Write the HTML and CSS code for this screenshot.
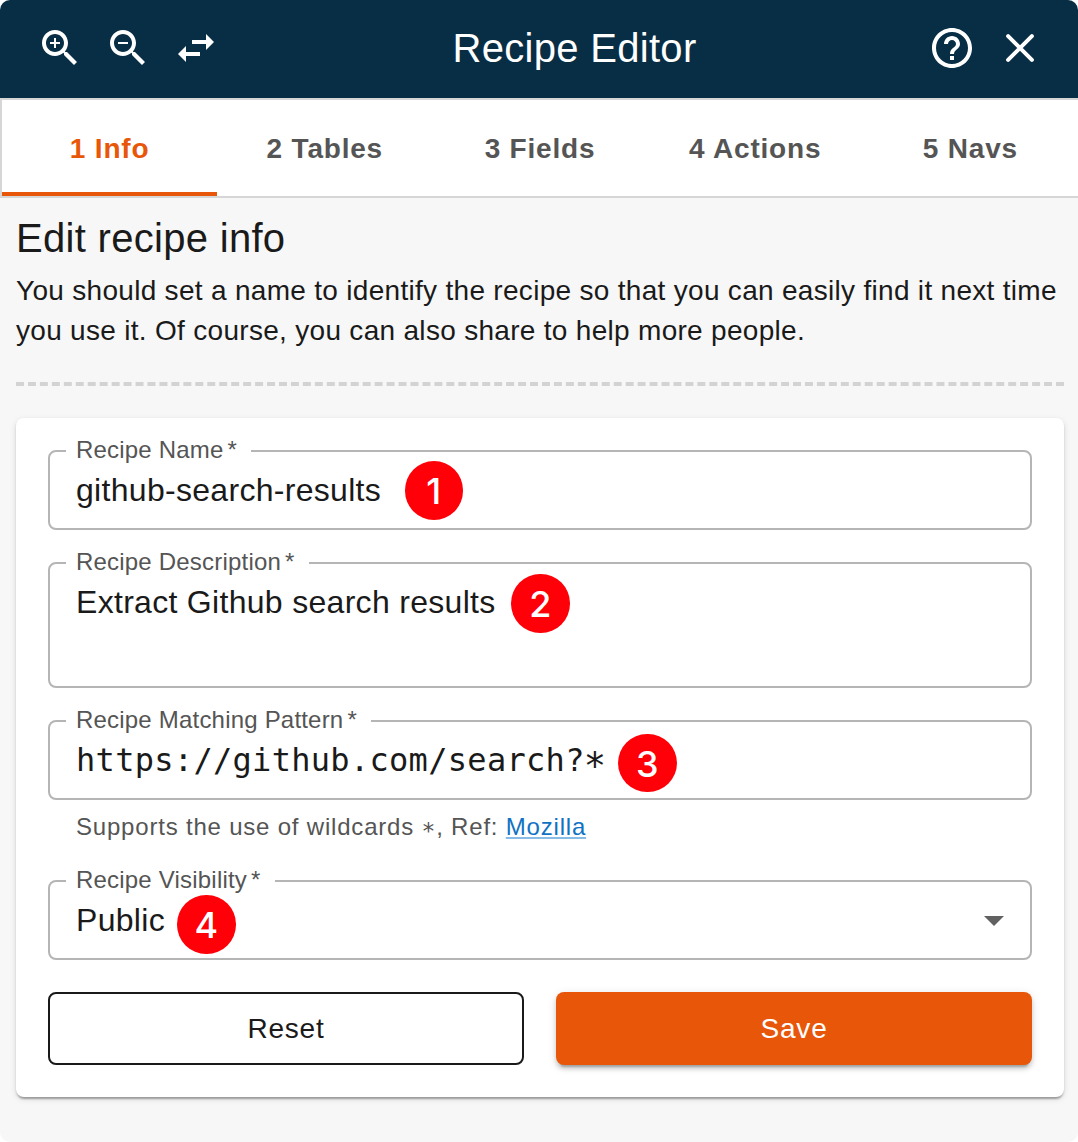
FILE: index.html
```html
<!DOCTYPE html>
<html lang="en">
<head>
<meta charset="utf-8">
<title>Recipe Editor</title>
<link rel="stylesheet" href="styles.css">
</head>
<body>
<div class="panel">
  <header class="header">
    <div class="tools">
      <svg class="icon" viewBox="0 0 24 24"><path d="M15.5 14h-.79l-.28-.27C15.41 12.59 16 11.11 16 9.5 16 5.91 13.09 3 9.5 3S3 5.91 3 9.5 5.91 16 9.5 16c1.61 0 3.09-.59 4.23-1.57l.27.28v.79l5 4.99L20.49 19l-4.99-5zm-6 0C7.01 14 5 11.99 5 9.5S7.01 5 9.5 5 14 7.01 14 9.5 11.99 14 9.5 14z"/><path d="M12 10h-2v2H9v-2H7V9h2V7h1v2h2v1z"/></svg>
      <svg class="icon" viewBox="0 0 24 24"><path d="M15.5 14h-.79l-.28-.27C15.41 12.59 16 11.11 16 9.5 16 5.91 13.09 3 9.5 3S3 5.91 3 9.5 5.91 16 9.5 16c1.61 0 3.09-.59 4.23-1.57l.27.28v.79l5 4.99L20.49 19l-4.99-5zm-6 0C7.01 14 5 11.99 5 9.5S7.01 5 9.5 5 14 7.01 14 9.5 11.99 14 9.5 14z"/><path d="M7 9h5v1H7z"/></svg>
      <svg class="icon" viewBox="0 0 24 24"><path d="M6.99 11 3 15l3.99 4v-3H14v-2H6.99v-3zM21 9l-3.99-4v3H10v2h7.01v3L21 9z"/></svg>
    </div>
    <h1 class="title">Recipe Editor</h1>
    <div class="tools">
      <svg class="icon" viewBox="0 0 24 24"><path d="M11 18h2v-2h-2v2zm1-16C6.48 2 2 6.48 2 12s4.48 10 10 10 10-4.48 10-10S17.52 2 12 2zm0 18c-4.41 0-8-3.59-8-8s3.59-8 8-8 8 3.59 8 8-3.59 8-8 8zm0-14c-2.21 0-4 1.79-4 4h2c0-1.1.9-2 2-2s2 .9 2 2c0 2-3 1.75-3 5h2c0-2.25 3-2.5 3-5 0-2.21-1.79-4-4-4z"/></svg>
      <svg class="icon close" viewBox="0 0 24 24"><path d="M6.05 6.05l11.9 11.9M17.95 6.05l-11.9 11.9"/></svg>
    </div>
  </header>
  <nav class="tabs">
    <a class="tab active">1 Info</a>
    <a class="tab">2 Tables</a>
    <a class="tab">3 Fields</a>
    <a class="tab">4 Actions</a>
    <a class="tab">5 Navs</a>
  </nav>
  <main class="content">
    <h2 class="heading">Edit recipe info</h2>
    <p class="intro">You should set a name to identify the recipe so that you can easily find it next time you use it. Of course, you can also share to help more people.</p>
    <hr class="divider">
    <form class="card">
      <fieldset class="field">
        <legend>Recipe Name<span class="required">*</span></legend>
        <div class="value">github-search-results</div>
        <span class="badge badge-name">1</span>
      </fieldset>
      <fieldset class="field tall">
        <legend>Recipe Description<span class="required">*</span></legend>
        <div class="value">Extract Github search results</div>
        <span class="badge badge-description">2</span>
      </fieldset>
      <div class="group">
        <fieldset class="field">
          <legend>Recipe Matching Pattern<span class="required">*</span></legend>
          <div class="value mono">https://github.com/search?<span class="wildcard">*</span></div>
          <span class="badge badge-pattern">3</span>
        </fieldset>
        <p class="helper">Supports the use of wildcards <code>*</code>, Ref: <a class="link">Mozilla</a></p>
      </div>
      <fieldset class="field">
        <legend>Recipe Visibility<span class="required">*</span></legend>
        <div class="value select">Public
          <svg class="arrow" viewBox="0 0 24 24"><path d="M7 10l5 5 5-5z"/></svg>
        </div>
        <span class="badge badge-visibility">4</span>
      </fieldset>
      <div class="actions">
        <button type="button" class="button outlined">Reset</button>
        <button type="button" class="button filled">Save</button>
      </div>
    </form>
  </main>
</div>
</body>
</html>
```

FILE: styles.css
```css
* { box-sizing: border-box; }

body {
  margin: 0;
  background: #fff;
  color: #1a1a1a;
  font-family: "Liberation Sans", Arial, sans-serif;
  overflow: hidden;
}

.panel {
  height: 1142px;
  background: #f7f7f7;
  border-radius: 10px;
  overflow: hidden;
}

.header {
  height: 98px;
  padding: 0 34px 2px 36px;
  display: flex;
  align-items: center;
  justify-content: space-between;
  background: #082e45;
  color: #fff;
}

.tools { display: flex; gap: 20px; }

.icon {
  display: block;
  width: 48px;
  height: 48px;
  fill: currentColor;
}

.icon.close {
  fill: none;
  stroke: currentColor;
  stroke-width: 2;
  stroke-linecap: round;
}

.title {
  margin: 0;
  padding-left: 1px;
  font-size: 40px;
  font-weight: 400;
  line-height: 64px;
  letter-spacing: 0.3px;
}

.tabs {
  width: 1080px;
  height: 100px;
  display: flex;
  background: #fff;
  border: 2px solid #d6d6d6;
}

.tab {
  flex: 1;
  display: flex;
  align-items: center;
  justify-content: center;
  border-bottom: 4px solid transparent;
  padding-top: 6px;
  font-size: 28px;
  font-weight: 700;
  letter-spacing: 0.8px;
  color: #555;
}

.tab.active {
  color: #e85709;
  border-bottom-color: #e85709;
}

.content { padding: 15px 14px 0 16px; }

.heading {
  margin: 0;
  font-size: 40px;
  font-weight: 400;
  line-height: 50px;
  letter-spacing: 0.3px;
}

.intro {
  margin: 8px 0 31px;
  font-size: 28px;
  line-height: 40px;
  letter-spacing: 0.3px;
}

.divider {
  margin: 0 0 32px;
  border: 0;
  border-top: 4px dashed #d3d3d3;
}

.card {
  padding: 32px;
  display: flex;
  flex-direction: column;
  gap: 32px;
  background: #fff;
  border-radius: 8px;
  box-shadow: 0 4px 2px -2px rgba(0, 0, 0, .2), 0 2px 2px rgba(0, 0, 0, .14), 0 2px 6px rgba(0, 0, 0, .12);
}

.field {
  position: relative;
  min-width: 0;
  height: 80px;
  margin: 0;
  padding: 0 26px 0 16px;
  border: 2px solid #b5b5b5;
  border-radius: 8px;
}

.field.tall { height: 126px; }

.field legend {
  height: 2px;
  padding: 0 14px 0 10px;
  font-size: 24px;
  line-height: 0;
  letter-spacing: 0.2px;
  color: #555;
}

.required { padding-left: 4px; }

.value {
  padding: 15px 0 0 10px;
  font-size: 32px;
  line-height: 46px;
  letter-spacing: 0.3px;
}

.mono { font-family: "DejaVu Sans Mono", monospace; }

.wildcard {
  font-size: 37px;
  line-height: 0;
  margin-left: -1px;
  vertical-align: -8px;
}

.select {
  display: flex;
  justify-content: space-between;
  padding-right: 0;
}

.arrow {
  width: 48px;
  height: 48px;
  margin: -1px -14px 0 0;
  fill: #616161;
}

.badge {
  position: absolute;
  width: 58.5px;
  height: 58.5px;
  border-radius: 50%;
  background: #ff0008;
  color: #fff;
  font: 500 36px/60px Inter, sans-serif;
  text-align: center;
}

.badge-name { left: 354.5px; top: 9.3px; }
.badge-description { left: 461px; top: 10.3px; }
.badge-pattern { left: 568px; top: 11.5px; }
.badge-visibility { left: 127px; top: 13px; }

.helper {
  margin: 7px 28px 1px;
  font-size: 24px;
  line-height: 40px;
  letter-spacing: 0.8px;
  color: #555;
}

.helper code {
  font-family: "DejaVu Sans Mono", monospace;
  font-size: 23px;
  line-height: 0;
  vertical-align: -4px;
}

.link {
  color: #1172c4;
  text-decoration: underline #88bbe5 2px;
  text-underline-offset: 2px;
}

.actions {
  display: grid;
  grid-template-columns: 1fr 1fr;
  gap: 32px;
}

.button {
  height: 73px;
  padding: 0;
  border: 0;
  border-radius: 8px;
  font: 400 28px/49px "Liberation Sans", Arial, sans-serif;
  letter-spacing: 0.8px;
}

.outlined {
  border: 2px solid #1a1a1a;
  background: #fff;
  color: #1a1a1a;
}

.filled {
  background: #e85709;
  color: #fff;
  box-shadow: 0 6px 2px -4px rgba(0, 0, 0, .2), 0 4px 4px rgba(0, 0, 0, .14), 0 2px 10px rgba(0, 0, 0, .12);
}
```
